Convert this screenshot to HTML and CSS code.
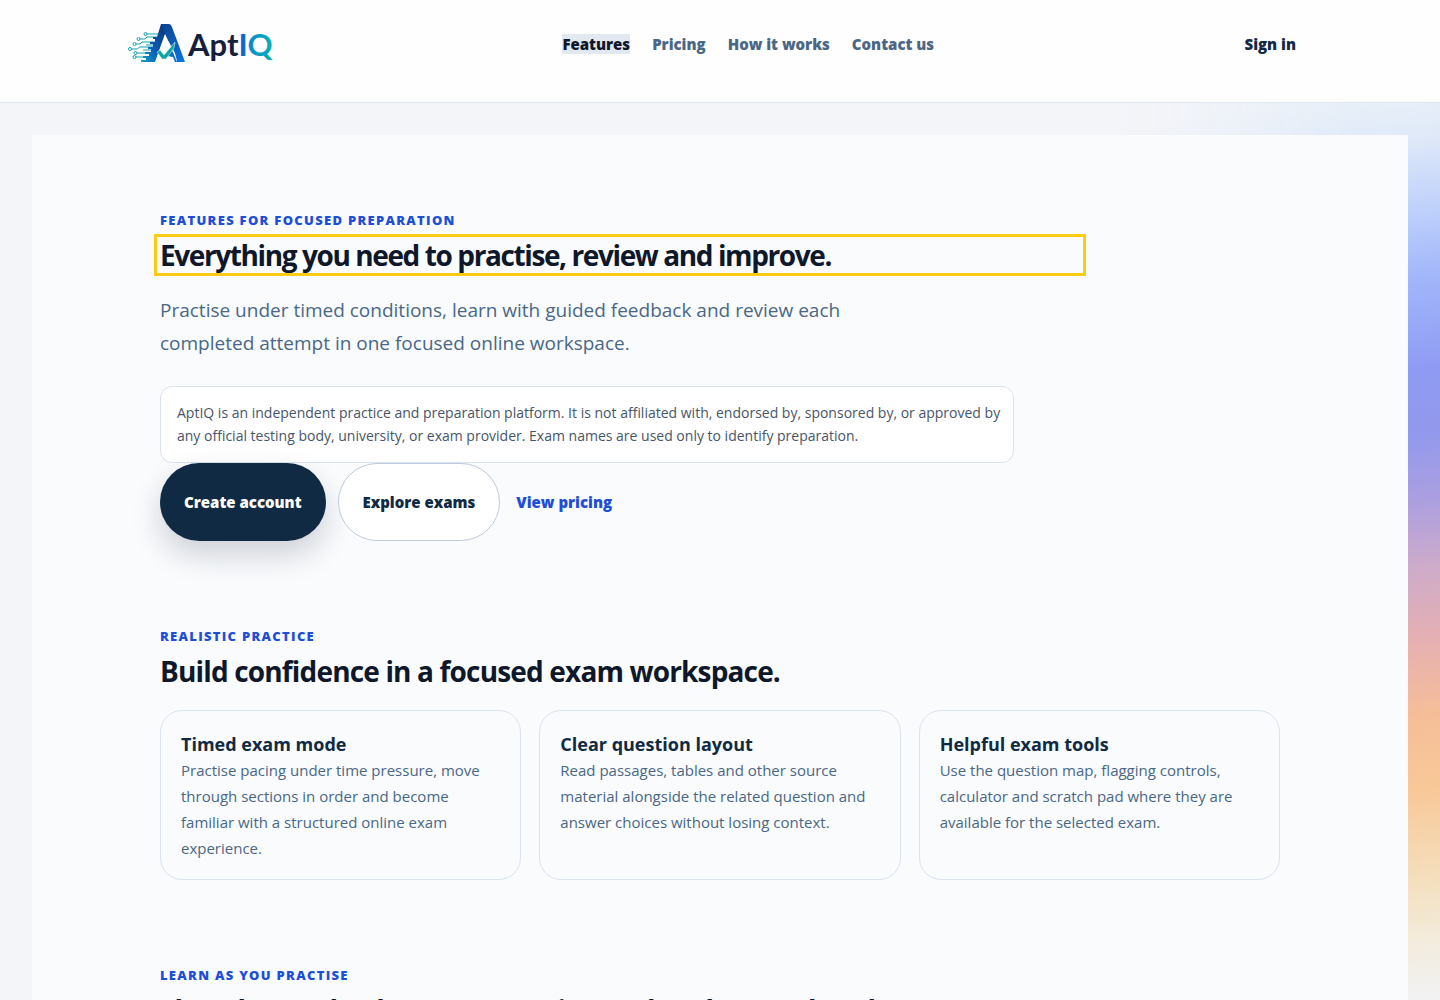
FILE: index.html
```html
<!DOCTYPE html>
<html lang="en">
<head>
    <meta charset="UTF-8">
    <meta name="viewport" content="width=device-width, initial-scale=1.0">
    <title>Features - AptIQ</title>
    <link rel="stylesheet" href="styles.css">
</head>
<body>
    <header class="site-header">
        <div class="header-inner">
            <a href="#" class="logo" aria-label="AptIQ home">
                <svg width="148" height="42" viewBox="0 0 148 42" role="img" aria-label="AptIQ">
                    <defs>
                        <linearGradient id="mark-left" x1="0" y1="1" x2="1" y2="0">
                            <stop offset="0" stop-color="#12a5c4"/>
                            <stop offset="0.4" stop-color="#0b5cb8"/>
                            <stop offset="1" stop-color="#0b2f6b"/>
                        </linearGradient>
                        <linearGradient id="mark-right" x1="0" y1="0" x2="1" y2="1">
                            <stop offset="0" stop-color="#0b3f8c"/>
                            <stop offset="1" stop-color="#0a78e0"/>
                        </linearGradient>
                        <linearGradient id="word-iq" gradientUnits="userSpaceOnUse" x1="114" y1="0" x2="147" y2="0">
                            <stop offset="0" stop-color="#0b62d0"/>
                            <stop offset="0.3" stop-color="#0890c8"/>
                            <stop offset="1" stop-color="#06b5b5"/>
                        </linearGradient>
                    </defs>
                    <!-- circuit lines -->
                    <g fill="none" stroke="#14a3ae" stroke-width="1">
                        <path d="M19 11h12M12 16h5l2-2h10M8 21h4l2-2h14M3.500 26h6l2-2h14M9 30h14M8 34h12M18 22h8M15 27h8"/>
                        <circle cx="17.500" cy="11" r="1.500"/>
                        <circle cx="10.500" cy="16" r="1.500"/>
                        <circle cx="6.500" cy="21" r="1.500"/>
                        <circle cx="2" cy="26" r="1.500"/>
                        <circle cx="7.500" cy="30" r="1.500"/>
                        <circle cx="6.500" cy="34" r="1.500"/>
                    </g>
                    <!-- letter mark -->
                    <path d="M33 1h8l-4 10-10 28H13v-2h5v-2h-3v-2h6v-2h-4v-2h6v-3h-3v-2h5v-3h-3v-2h5v-3h-2v-2h4z" fill="url(#mark-left)"/>
                    <path d="M33 1h8q2 0 3 3l13 35h-8l-4-10-8-18z" fill="url(#mark-right)"/>
                    <path d="M37 12l-8 22 7 5 13-1-2-8z" fill="#fff"/>
                    <path d="M49 39l-5-12-5 6 6 1 2 5z" fill="#0a6fd4"/>
                    <path d="M29 29l3-2 4 5 11-13-1 6-8 11h-4z" fill="#0aa79d" stroke="#fff" stroke-width="0.500"/>
                    <text x="60" y="33" class="logo-word">Apt<tspan fill="url(#word-iq)">IQ</tspan></text>
                </svg>
            </a>
            <nav class="main-nav" aria-label="Main">
                <a href="#" class="active" aria-current="page">Features</a>
                <a href="#">Pricing</a>
                <a href="#">How it works</a>
                <a href="#">Contact us</a>
            </nav>
            <a href="#" class="sign-in">Sign in</a>
        </div>
    </header>

    <div class="page">
        <main class="panel">
            <section class="hero">
                <p class="eyebrow">Features for focused preparation</p>
                <h1 tabindex="-1">Everything you need to practise, review and improve.</h1>
                <p class="lead">Practise under timed conditions, learn with guided feedback and review each completed attempt in one focused online workspace.</p>
                <p class="notice">AptIQ is an independent practice and preparation platform. It is not affiliated with, endorsed by, sponsored by, or approved by any official testing body, university, or exam provider. Exam names are used only to identify preparation.</p>
                <div class="actions">
                    <a href="#" class="btn btn-primary">Create account</a>
                    <a href="#" class="btn btn-secondary">Explore exams</a>
                    <a href="#" class="text-link">View pricing</a>
                </div>
            </section>

            <section>
                <p class="eyebrow">Realistic practice</p>
                <h2>Build confidence in a focused exam workspace.</h2>
                <div class="cards">
                    <article class="card">
                        <h3>Timed exam mode</h3>
                        <p>Practise pacing under time pressure, move through sections in order and become familiar with a structured online exam experience.</p>
                    </article>
                    <article class="card">
                        <h3>Clear question layout</h3>
                        <p>Read passages, tables and other source material alongside the related question and answer choices without losing context.</p>
                    </article>
                    <article class="card">
                        <h3>Helpful exam tools</h3>
                        <p>Use the question map, flagging controls, calculator and scratch pad where they are available for the selected exam.</p>
                    </article>
                </div>
            </section>

            <section>
                <p class="eyebrow">Learn as you practise</p>
                <h2>Slow down, check your reasoning and understand each answer.</h2>
            </section>
        </main>
    </div>
</body>
</html>
```

FILE: styles.css
```css
* {
    margin: 0;
    padding: 0;
    box-sizing: border-box;
}

body {
    height: 100vh;
    overflow: hidden;
    font-family: 'Open Sans', 'Noto Sans', sans-serif;
    font-size: 15px;
    color: #0f172a;
    background: #f4f5f9;
}

a {
    text-decoration: none;
}

/* Header */
.site-header {
    background: #fefefe;
    border-bottom: 1px solid #e2e8f0;
}

.header-inner {
    display: flex;
    justify-content: space-between;
    align-items: center;
    max-width: 1184px;
    margin: 0 auto;
    padding: 23px 16px 37px 0;
}

.logo {
    display: flex;
}

.logo-word {
    font-family: Lato, sans-serif;
    font-size: 31px;
    font-weight: 700;
    fill: #16203c;
}

.main-nav {
    display: flex;
    gap: 22px;
    padding-right: 24px;
}

.main-nav a,
.sign-in {
    font-weight: 800;
    line-height: 20px;
    color: #4a6785;
}

.main-nav .active {
    color: #0f172a;
    background: #e2e8f0;
}

.main-nav a:hover {
    color: #0f172a;
}

.sign-in {
    color: #112a43;
}

/* Page background */
.page {
    position: relative;
    padding: 32px;
}

.page::before {
    content: '';
    position: absolute;
    top: 0;
    right: 0;
    width: 320px;
    height: 900px;
    background: linear-gradient(174deg, #e9f0f8 2%, #dfe9f8 7%, #bed0fb 15%, #a2b6fa 22%, #8f9bf3 32%, #9399ec 39%, #ac9fe0 46%, #cdabca 53%, #e6b0b2 61%, #f5be98 69%, #f8c898 77%, #f4e0bf 87%, #f3ebdc 93%, #f2f2f2 99%);
    -webkit-mask-image: linear-gradient(to right, transparent, #000 70%);
    mask-image: linear-gradient(to right, transparent, #000 70%);
}

.panel {
    position: relative;
    display: flex;
    flex-direction: column;
    gap: 85px;
    padding: 75px 128px;
    background: #f9fbfd;
}

.eyebrow {
    margin-bottom: 10px;
    font-size: 13px;
    font-weight: 800;
    line-height: 20px;
    letter-spacing: 0.1em;
    text-transform: uppercase;
    color: #1d4ed8;
}

h1,
h2 {
    font-size: 28px;
    font-weight: 700;
    line-height: 30px;
    letter-spacing: -0.05em;
}

h1 {
    max-width: 920px;
    outline: 3px solid #facc15;
    outline-offset: 3px;
}

h2 {
    letter-spacing: -0.03em;
}

.lead {
    max-width: 720px;
    margin-top: 24px;
    font-size: 19px;
    line-height: 33px;
    color: #4a6785;
}

.notice {
    max-width: 854px;
    margin-top: 26px;
    padding: 14px 8px 15px 16px;
    font-size: 14px;
    line-height: 23px;
    color: #475569;
    background: #fff;
    border: 1px solid #dbe3ef;
    border-radius: 12px;
}

.actions {
    display: flex;
    align-items: center;
}

.btn {
    padding: 28px 24px;
    font-weight: 800;
    line-height: 20px;
    border-radius: 40px;
}

.btn-primary {
    margin-right: 12px;
    padding: 29px 24px;
    color: #fff;
    background: #112a43;
    box-shadow: 0 14px 30px rgba(15, 23, 42, 0.18);
}

.btn-secondary {
    margin-right: 16px;
    color: #112a43;
    background: #fff;
    border: 1px solid #bfcbdc;
}

.text-link {
    font-weight: 800;
    color: #1d4ed8;
}

/* Cards */
.cards {
    display: grid;
    grid-template-columns: repeat(3, 1fr);
    gap: 18px;
    margin-top: 24px;
}

.card {
    padding: 20px 20px 18px;
    border: 1px solid #dbe3ef;
    border-radius: 22px;
}

.card h3 {
    font-size: 18px;
    font-weight: 700;
    line-height: 26px;
    color: #112a43;
}

.card p {
    line-height: 26px;
    color: #4a6785;
}

@media (max-width: 900px) {
    .panel {
        padding: 48px 24px;
    }

    .cards {
        grid-template-columns: 1fr;
    }
}
```
